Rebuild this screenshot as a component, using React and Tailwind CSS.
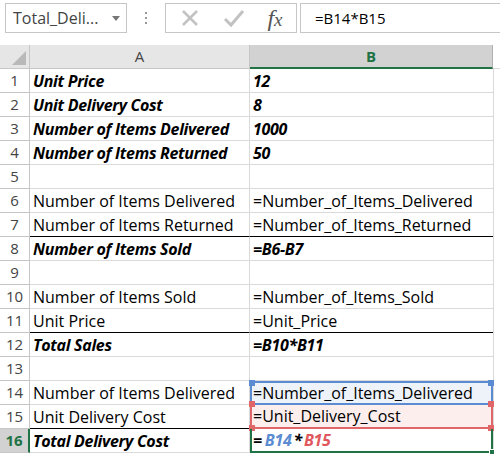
import React from 'react';

const rows = [
  { a: 'Unit Price', b: '12', bold: true },
  { a: 'Unit Delivery Cost', b: '8', bold: true },
  { a: 'Number of Items Delivered', b: '1000', bold: true },
  { a: 'Number of Items Returned', b: '50', bold: true },
  { a: '', b: '' },
  { a: 'Number of Items Delivered', b: '=Number_of_Items_Delivered' },
  { a: 'Number of Items Returned', b: '=Number_of_Items_Returned', line: true },
  { a: 'Number of Items Sold', b: '=B6-B7', bold: true },
  { a: '', b: '' },
  { a: 'Number of Items Sold', b: '=Number_of_Items_Sold' },
  { a: 'Unit Price', b: '=Unit_Price', line: true },
  { a: 'Total Sales', b: '=B10*B11', bold: true },
  { a: '', b: '' },
  { a: 'Number of Items Delivered', b: '=Number_of_Items_Delivered', ref: 'blue' },
  { a: 'Unit Delivery Cost', b: '=Unit_Delivery_Cost', ref: 'red', line: true },
  { a: 'Total Delivery Cost', b: 'formula', bold: true, ref: 'green' },
];

function Handle({ className }) {
  return <div className={'absolute w-[6px] h-[6px] ' + className} />;
}

function BCell({ row }) {
  const txt = row.bold ? 'font-bold italic tracking-[-0.3px]' : '';
  if (row.ref === 'blue') {
    return (
      <div className="relative h-full bg-[#eef3fa] border-2 border-[#5b8bd0] flex items-center pl-[1px]">
        =Number_of_Items_Delivered
        <Handle className="bg-[#5b8bd0] -left-[3px] -top-[3px]" />
        <Handle className="bg-[#5b8bd0] -right-[3px] -top-[3px]" />
      </div>
    );
  }
  if (row.ref === 'red') {
    return (
      <div className="relative h-full bg-[#fdeeee] border-x-2 border-b-2 border-[#e0666a] flex items-center pl-[1px]">
        =Unit_Delivery_Cost
        <Handle className="bg-[#e0666a] -left-[3px] -top-[4px]" />
        <Handle className="bg-[#e0666a] -right-[3px] -top-[4px]" />
        <Handle className="bg-[#e0666a] -left-[3px] -bottom-[4px]" />
        <Handle className="bg-[#e0666a] -right-[3px] -bottom-[4px]" />
      </div>
    );
  }
  if (row.ref === 'green') {
    return (
      <div className="relative h-full border-x-2 border-b-2 border-[#217346] flex items-center pl-[1px] font-bold italic tracking-[-0.3px]">
        =<span className="text-[#5b8bd0] ml-[3px]">B14</span>
        <span className="mx-[2px]">*</span>
        <span className="text-[#e0585c]">B15</span>
        <Handle className="bg-[#217346] -right-[4px] -bottom-[4px] border border-white" />
      </div>
    );
  }
  return (
    <div className={'h-full flex items-center pl-[3px] border-b ' + (row.line ? 'border-black' : 'border-[#dadada]') + ' ' + txt}>
      {row.b}
    </div>
  );
}

export default function App() {
  return (
    <div
      className="w-[500px] h-[459px] bg-white overflow-hidden text-[16px] text-black"
      style={{ fontFamily: '"Open Sans", "Liberation Sans", sans-serif' }}
    >
      <div className="h-[45px] flex items-start pt-[3px]">
        <div className="ml-[5px] w-[122px] h-[30px] border border-[#c6c6c6] flex items-center justify-between pl-[7px] pr-[6px] text-[#444] text-[16px]">
          <span>Total_Deli...</span>
          <svg width="8" height="5" viewBox="0 0 8 5"><path d="M0 0h8L4 5z" fill="#777" /></svg>
        </div>
        <div className="w-[38px] h-[30px] flex flex-col items-center justify-center gap-[3px]">
          <div className="w-[2px] h-[2px] bg-[#999]" />
          <div className="w-[2px] h-[2px] bg-[#999]" />
          <div className="w-[2px] h-[2px] bg-[#999]" />
        </div>
        <div className="w-[132px] h-[30px] border border-[#c6c6c6] flex items-center">
          <div className="w-[48px] flex justify-center">
            <svg width="20" height="20" viewBox="0 0 20 20">
              <path d="M3 3L17 17M17 3L3 17" stroke="#c2c2c2" strokeWidth="2.5" />
            </svg>
          </div>
          <div className="w-[40px] flex justify-center">
            <svg width="22" height="20" viewBox="0 0 22 20">
              <path d="M2 11l6 6L20 3" stroke="#c2c2c2" strokeWidth="3" fill="none" />
            </svg>
          </div>
          <div className="flex-1 flex justify-center items-baseline text-[#555] italic text-[24px] leading-none" style={{ fontFamily: '"Liberation Serif", serif' }}>
            <span>f</span><span className="text-[19px]">x</span>
          </div>
        </div>
        <div className="ml-[3px] flex-1 h-[30px] border border-[#c6c6c6] border-r-0 flex items-center pl-[14px] text-[15px]">
          =B14*B15
        </div>
      </div>

      <div className="grid grid-cols-[30px_220px_243px_7px]">
        <div className="h-[24px] bg-[#e6e6e6] border-r border-b border-[#c6c6c6] relative">
          <svg className="absolute right-[3px] bottom-[3px]" width="14" height="14" viewBox="0 0 14 14">
            <path d="M14 0V14H0z" fill="#b9b9b9" />
          </svg>
        </div>
        <div className="h-[24px] bg-[#e6e6e6] border-r border-b border-[#c6c6c6] flex items-center justify-center text-[#444] text-[15px]">A</div>
        <div className="h-[24px] bg-[#d2d2d2] border-b-2 border-[#217346] border-r border-r-[#b0b0b0] flex items-center justify-center text-[#217346] font-bold text-[15px]">B</div>
        <div className="h-[24px] border-b border-[#dadada]" />

        {rows.map((row, i) => {
          const n = i + 1;
          const isSel = n === 16;
          const aBorder = row.line ? 'border-b-black' : 'border-b-[#dadada]';
          return (
            <React.Fragment key={n}>
              <div
                className={
                  'h-[24px] flex items-center justify-center border-r border-b border-[#c6c6c6] text-[15px] ' +
                  (isSel ? 'bg-[#d2d2d2] text-[#217346] font-bold border-r-2 border-r-[#217346]' : 'bg-white text-[#444]')
                }
              >
                {n}
              </div>
              <div
                className={
                  'h-[24px] flex items-center pl-[3px] border-r border-r-[#dadada] border-b whitespace-nowrap ' +
                  aBorder +
                  (row.bold ? ' font-bold italic tracking-[-0.3px]' : '')
                }
              >
                {row.a}
              </div>
              <div className="h-[24px] whitespace-nowrap">
                <BCell row={row} />
              </div>
              <div className="h-[24px] border-l border-[#dadada]" />
            </React.Fragment>
          );
        })}
      </div>
    </div>
  );
}
